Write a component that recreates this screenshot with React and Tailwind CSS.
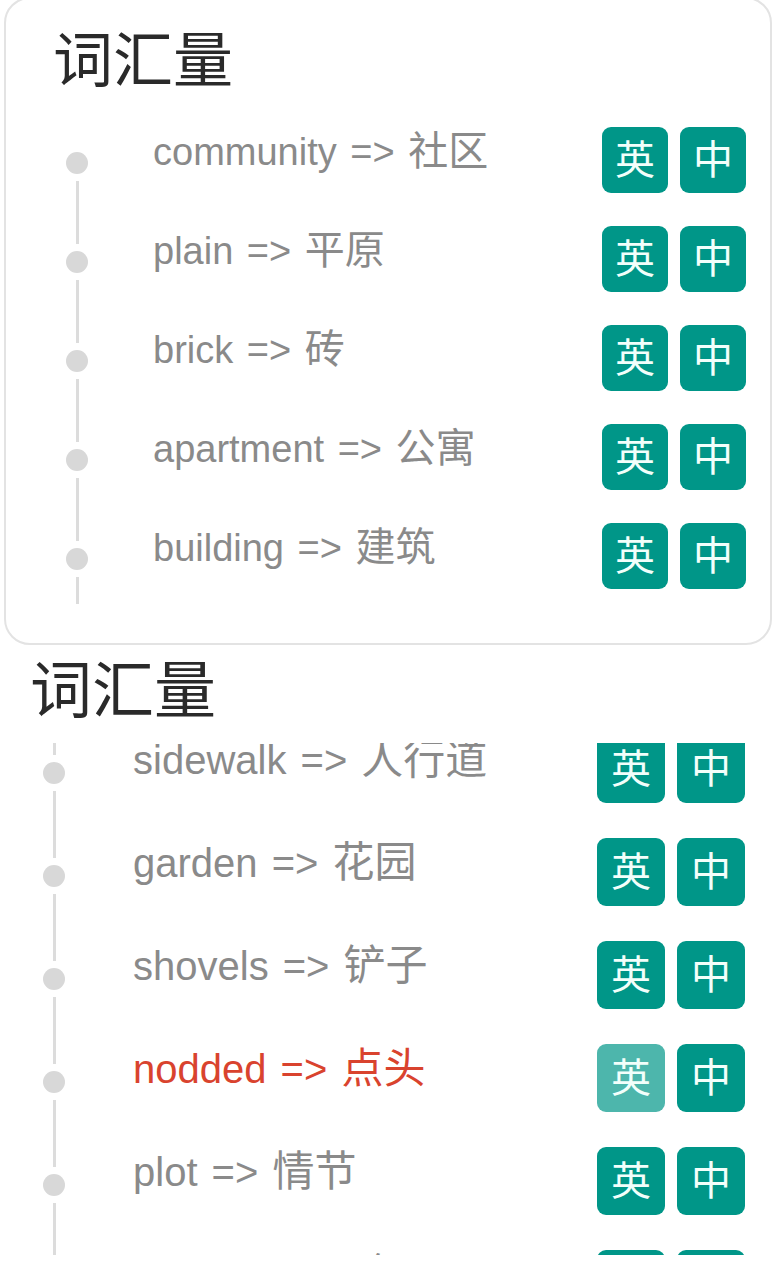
import React from 'react';

const FONT = "font-['Liberation_Sans','Noto_Sans_CJK_SC',sans-serif]";

const firstList = [
  { id: 1, word: 'community', meaning: '社区' },
  { id: 2, word: 'plain', meaning: '平原' },
  { id: 3, word: 'brick', meaning: '砖' },
  { id: 4, word: 'apartment', meaning: '公寓' },
  { id: 5, word: 'building', meaning: '建筑' },
];

// the second list is scrolled a little, the top row is partly hidden
const secondList = [
  { id: 6, word: 'sidewalk', meaning: '人行道' },
  { id: 7, word: 'garden', meaning: '花园' },
  { id: 8, word: 'shovels', meaning: '铲子' },
  { id: 9, word: 'nodded', meaning: '点头', wrong: true },
  { id: 10, word: 'plot', meaning: '情节' },
  { id: 11, word: 'neighbor', meaning: '邻居' },
];

const LangButtons = ({ big, dim }) => {
  const size = big ? 'w-[68px] h-[68px] rounded-[9px]' : 'w-[66px] h-[66px] rounded-[9px]';
  return (
    <div className="flex gap-[12px] shrink-0">
      <button
        className={`${size} flex items-center justify-center text-[40px] leading-none text-[#f2fffb] ${
          dim ? 'bg-[#4db6ac]' : 'bg-[#009688]'
        }`}
      >
        英
      </button>
      <button className={`${size} flex items-center justify-center text-[40px] leading-none text-[#f2fffb] bg-[#009688]`}>
        中
      </button>
    </div>
  );
};

// dot plus the line running down to the next dot; `lead` draws the tail of the row above
const Axis = ({ big, last, lead }) => (
  <div className={`flex flex-col items-center w-[22px] shrink-0 ${lead ? '' : big ? 'pt-[27px]' : 'pt-[25px]'}`}>
    {lead && <div className="w-[3px] h-[20px] mb-[7px] bg-[#dcdcdc]" />}
    <div className="w-[22px] h-[22px] rounded-full bg-[#d8d8d8]" />
    <div
      className={`w-[3px] mt-[7px] bg-[#dcdcdc] ${
        last ? 'h-[27px]' : big ? 'h-[67px]' : 'h-[63px]'
      }`}
    />
  </div>
);

const App = () => {
  return (
    <div className={`w-[773px] h-[1280px] bg-white overflow-hidden ${FONT}`}>
      {/* first card */}
      <div className="ml-[4px] -mt-[3px] w-[768px] h-[648px] border-2 border-[#e3e3e3] rounded-[26px] pt-[27px] pr-[24px]">
        <h2 className="pl-[47px] text-[60px] leading-[72px] text-[#2a2a2a] font-normal mb-[29px]">词汇量</h2>
        <ul>
          {firstList.map((item, index) => (
            <li key={item.id} className="h-[99px] flex items-start">
              <div className="ml-[60px]">
                <Axis last={index === firstList.length - 1} />
              </div>
              <span className="ml-[65px] mt-[4px] text-[38px] leading-none text-[#8a8a8a] whitespace-nowrap [word-spacing:3px]">
                {item.word} =&gt; <span className="text-[40px]">{item.meaning}</span>
              </span>
              <div className="ml-auto">
                <LangButtons />
              </div>
            </li>
          ))}
        </ul>
      </div>

      {/* second list, scrolled */}
      <div className="mt-[10px]">
        <h2 className="pl-[30px] text-[62px] leading-[74px] text-[#2a2a2a] font-normal">词汇量</h2>
        <div className="mt-[14px] h-[512px] overflow-hidden pr-[28px]">
          <ul className="-mt-[8px]">
            {secondList.map((item, index) => (
              <li key={item.id} className="h-[103px] flex items-start">
                <div className="ml-[43px]">
                  <Axis big lead={index === 0} />
                </div>
                <span
                  className={`ml-[68px] mt-[4px] text-[40px] leading-none whitespace-nowrap [word-spacing:3px] ${
                    item.wrong ? 'text-[#d9432e]' : 'text-[#8a8a8a]'
                  }`}
                >
                  {item.word} =&gt; <span className="text-[42px]">{item.meaning}</span>
                </span>
                <div className="ml-auto">
                  <LangButtons big dim={item.wrong} />
                </div>
              </li>
            ))}
          </ul>
        </div>
      </div>
    </div>
  );
};

export default App;
